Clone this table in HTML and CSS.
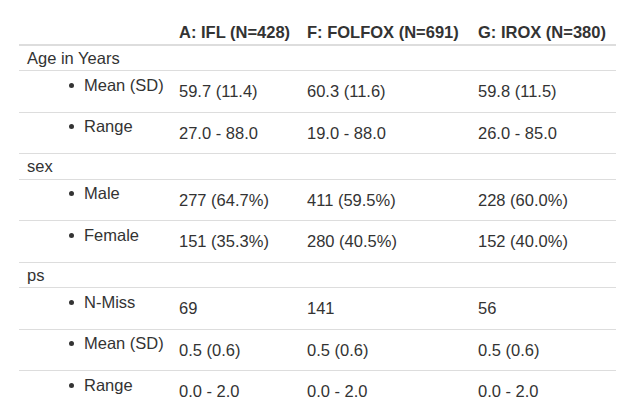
FILE: index.html
```html
<!DOCTYPE html>
<html lang="en">
<head>
<meta charset="utf-8">
<title>Summary table</title>
<link rel="stylesheet" href="styles.css">
</head>
<body>
<table class="summary">
  <colgroup>
    <col class="c-label">
    <col class="c-a">
    <col class="c-f">
    <col class="c-g">
  </colgroup>
  <thead>
    <tr><th></th><th>A: IFL (N=428)</th><th>F: FOLFOX (N=691)</th><th>G: IROX (N=380)</th></tr>
  </thead>
  <tbody>
    <tr><td>Age in Years</td><td></td><td></td><td></td></tr>
    <tr><td><ul class="item"><li>Mean (SD)</li></ul></td><td>59.7 (11.4)</td><td>60.3 (11.6)</td><td>59.8 (11.5)</td></tr>
    <tr><td><ul class="item"><li>Range</li></ul></td><td>27.0 - 88.0</td><td>19.0 - 88.0</td><td>26.0 - 85.0</td></tr>
    <tr><td>sex</td><td></td><td></td><td></td></tr>
    <tr><td><ul class="item"><li>Male</li></ul></td><td>277 (64.7%)</td><td>411 (59.5%)</td><td>228 (60.0%)</td></tr>
    <tr><td><ul class="item"><li>Female</li></ul></td><td>151 (35.3%)</td><td>280 (40.5%)</td><td>152 (40.0%)</td></tr>
    <tr><td>ps</td><td></td><td></td><td></td></tr>
    <tr><td><ul class="item"><li>N-Miss</li></ul></td><td>69</td><td>141</td><td>56</td></tr>
    <tr><td><ul class="item"><li>Mean (SD)</li></ul></td><td>0.5 (0.6)</td><td>0.5 (0.6)</td><td>0.5 (0.6)</td></tr>
    <tr><td><ul class="item"><li>Range</li></ul></td><td>0.0 - 2.0</td><td>0.0 - 2.0</td><td>0.0 - 2.0</td></tr>
  </tbody>
</table>
</body>
</html>
```

FILE: styles.css
```css
html, body {
  margin: 0;
  padding: 0;
  background: #fff;
}

body {
  font-family: "Liberation Sans", Arial, Helvetica, sans-serif;
  font-size: 16.5px;
  color: #333;
}

.summary {
  border-collapse: collapse;
  table-layout: fixed;
  width: 597px;
  margin: 19px 0 0 19px;
}

.c-label { width: 152px; }
.c-a { width: 128px; }
.c-f { width: 171px; }
.c-g { width: 146px; }

.summary th,
.summary td {
  padding: 3px 8px;
  line-height: 18.5px;
  text-align: left;
  vertical-align: middle;
  white-space: nowrap;
}

.summary thead th {
  font-weight: bold;
  padding: 4px 8px 2px;
  border-bottom: 2px solid #ddd;
}

.summary tbody td {
  border-top: 1px solid #ddd;
}

.item {
  list-style: none;
  margin: 0 0 14.5px;
  padding: 1.5px 0 0 42px;
}

.item li::before {
  content: "";
  display: inline-block;
  width: 5px;
  height: 5px;
  border-radius: 50%;
  background: #333;
  margin-right: 10px;
  vertical-align: 3px;
}
```
